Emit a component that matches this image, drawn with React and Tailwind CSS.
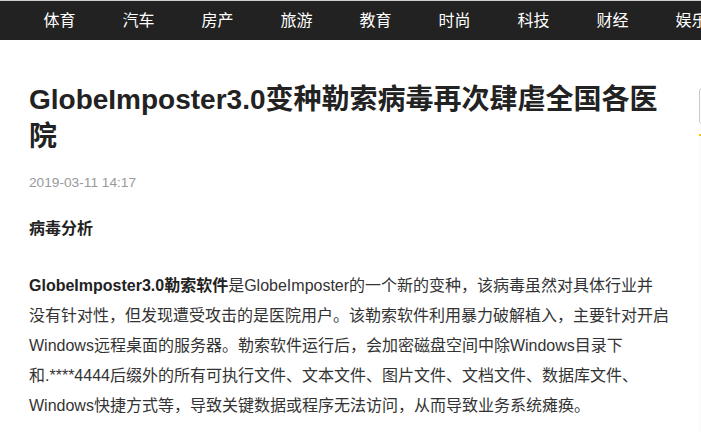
import React from "react";

const nav = ["体育", "汽车", "房产", "旅游", "教育", "时尚", "科技", "财经", "娱乐"];

const font = { fontFamily: '"Liberation Sans", Arial, "Noto Sans CJK SC", sans-serif' };

export default function App() {
  return (
    <div
      className="w-[701px] h-[432px] overflow-hidden bg-white"
      style={font}
    >
      <div className="border-t border-[#d0d0d0] bg-[#222222] h-[40px] flex items-center pl-[20px] overflow-hidden">
        {nav.map((n) => (
          <div
            key={n}
            className="w-[79px] shrink-0 text-center text-white text-[16px] leading-[20px]"
          >
            {n}
          </div>
        ))}
      </div>
      <div className="flex">
        <div className="w-[699px] shrink-0 pl-[29px] pr-[30px]">
          <h1 className="mt-[41px] text-[28px] leading-[37px] font-bold text-[#222222] whitespace-nowrap">
            GlobeImposter3.0变种勒索病毒再次肆虐全国各医
            <br />院
          </h1>
          <div className="mt-[18px] text-[13.7px] leading-[20px] text-[#999999]">
            2019-03-11 14:17
          </div>
          <div className="mt-[21px] text-[16px] leading-[30px] font-bold text-[#222222]">
            病毒分析
          </div>
          <p className="mt-[27px] text-[16px] leading-[30px] text-[#333333] whitespace-nowrap">
            <b className="text-[#222222]">GlobeImposter3.0勒索软件</b>
            是GlobeImposter的一个新的变种，该病毒虽然对具体行业并
            <br />
            没有针对性，但发现遭受攻击的是医院用户。该勒索软件利用暴力破解植入，主要针对开启
            <br />
            Windows远程桌面的服务器。勒索软件运行后，会加密磁盘空间中除Windows目录下
            <br />
            和.****4444后缀外的所有可执行文件、文本文件、图片文件、文档文件、数据库文件、
            <br />
            Windows快捷方式等，导致关键数据或程序无法访问，从而导致业务系统瘫痪。
          </p>
        </div>
        <div className="w-[300px] shrink-0">
          <div className="mt-[48px] h-[36px] border border-[#c8c8c8] rounded-[3px]" />
          <div className="mt-[10px] h-[300px] border-t-2 border-[#f5c400] bg-[#fafafa]" />
        </div>
      </div>
    </div>
  );
}
